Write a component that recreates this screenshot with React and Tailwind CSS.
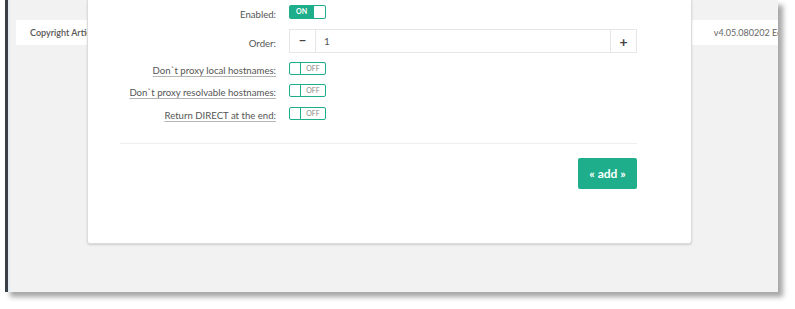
import React from "react";

const GREEN = "bg-[#1fae8b]";

function ToggleOn() {
  return (
    <div className="flex h-[14px] w-[37px] items-stretch rounded-[2px] bg-[#1fae8b] p-[1px]">
      <div className="flex flex-1 items-center pl-[6px] text-[7px] font-bold leading-none text-white">ON</div>
      <div className="w-[11px] rounded-[1px] bg-white"></div>
    </div>
  );
}

function ToggleOff() {
  return (
    <div className="flex h-[13px] w-[37px] items-stretch rounded-[2px] border border-[#1fae8b] bg-white">
      <div className="w-[11px] border-r border-[#1fae8b]"></div>
      <div className="flex flex-1 items-center justify-center text-[7px] leading-none text-[#888]">OFF</div>
    </div>
  );
}

function Row({ label, underline, h, mt, children }) {
  return (
    <div className={`flex items-center ${h} ${mt}`}>
      <div className="w-[156px] whitespace-nowrap text-right">
        <span
          className={`text-[9.6px] text-[#555] ${underline ? "underline decoration-[#b5b5b5] underline-offset-[2px]" : ""}`}
        >
          {label}
        </span>
      </div>
      <div className="ml-[13px] flex flex-1 items-center">{children}</div>
    </div>
  );
}

export default function App() {
  return (
    <div
      className="relative h-[309px] w-[795px] overflow-hidden bg-white"
      style={{ fontFamily: "Lato, 'Open Sans', sans-serif" }}
    >
      {/* window */}
      <div className="ml-[5px] flex h-[292px] w-[773px] border-l-[3px] border-[#3b4046] bg-[#f2f2f2] shadow-[5px_5px_5px_rgba(0,0,0,0.35)]">
        <div className="w-[2px] bg-[#e6edf2]"></div>
        <div className="flex-1 overflow-hidden">
          <div className="ml-[6px] mt-[20px] flex h-[25px] items-center justify-between bg-white">
            <span className="pl-[14px] text-[9px] font-semibold text-[#555]">Copyright Articatech</span>
            <span className="whitespace-nowrap text-[9px] text-[#666]" style={{ marginRight: "-4px" }}>
              v4.05.080202 Ed
            </span>
          </div>
        </div>
      </div>

      {/* modal */}
      <div className="absolute left-[87px] top-0 w-[605px] rounded-b-[3px] border-x border-b border-[#dcdcdc] bg-white pb-[54px] pl-[32px] pr-[54px] shadow-[0_1px_2px_rgba(0,0,0,0.15)]">
        <Row label="Enabled:" h="h-[23px]" mt="mt-0">
          <ToggleOn />
        </Row>
        <Row label="Order:" h="h-[24px]" mt="mt-[6px]">
          <div className="flex h-[24px] w-full border border-[#e6e6e6]">
            <div className="flex w-[26px] items-center justify-center border-r border-[#e6e6e6] text-[13px] font-bold text-[#444]">
              −
            </div>
            <div className="flex flex-1 items-center pl-[8px] text-[10px] text-[#555]">1</div>
            <div className="flex w-[26px] items-center justify-center border-l border-[#e6e6e6] text-[14px] font-bold text-[#444]">
              +
            </div>
          </div>
        </Row>
        <Row label="Don`t proxy local hostnames:" underline h="h-[22px]" mt="mt-[4px]">
          <ToggleOff />
        </Row>
        <Row label="Don`t proxy resolvable hostnames:" underline h="h-[22px]" mt="mt-0">
          <ToggleOff />
        </Row>
        <Row label="Return DIRECT at the end:" underline h="h-[22px]" mt="mt-[1px]">
          <ToggleOff />
        </Row>
        <div className="mt-[19px] border-t border-[#eeeeee]"></div>
        <div className="mt-[14px] flex justify-end">
          <button className={`h-[31px] w-[59px] rounded-[2px] ${GREEN} text-[12px] font-bold text-white`}>
            « add »
          </button>
        </div>
      </div>
    </div>
  );
}
